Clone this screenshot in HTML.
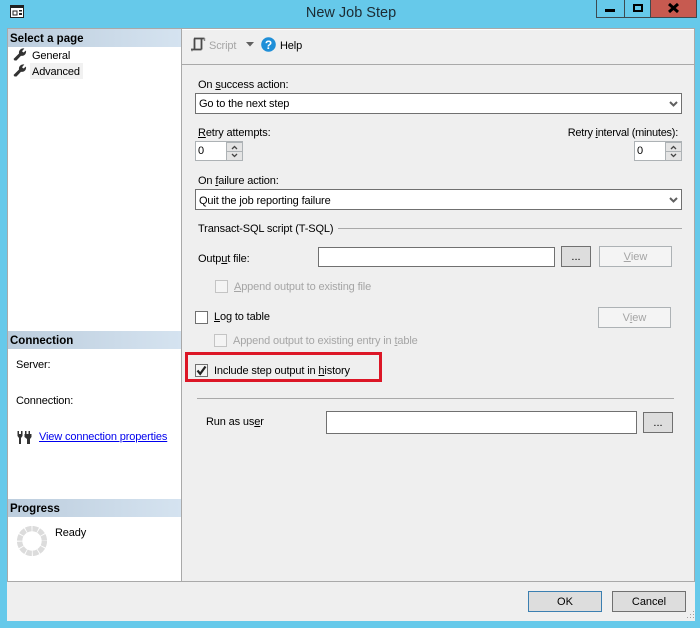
<!DOCTYPE html>
<html><head><meta charset="utf-8">
<style>
html,body{margin:0;padding:0;}
body{width:700px;height:628px;overflow:hidden;position:relative;background:#66c9ea;font-family:"Liberation Sans",sans-serif;font-size:11px;color:#000;}
div,span.a,svg{position:absolute;}
.t{white-space:nowrap;line-height:14px;height:14px;font-size:11px;letter-spacing:-.14px;margin-top:1px;}
.g{color:#a5a5a5;}
.hd{left:8px;width:173px;height:18px;background:linear-gradient(90deg,#bccddd,#d5e3f0);}
.hdt{left:10px;font-weight:bold;font-size:11.5px;white-space:nowrap;line-height:18px;margin-top:1px;}
.box{background:#fff;border:1px solid #707070;box-sizing:border-box;}
.btn{background:#dddddd;border:1px solid #707070;box-sizing:border-box;text-align:center;font-size:11px;}
.dis{background:#f4f4f4;border:1px solid #adb2b5;box-sizing:border-box;text-align:center;color:#a5a5a5;font-size:11px;line-height:20px;}
.chk{width:11px;height:11px;border:1px solid #707070;background:#fff;}
.chkd{width:11px;height:11px;border:1px solid #c4c4c4;background:#f4f4f4;}
u{text-underline-offset:1px;}
</style></head><body>
<!-- title -->
<svg style="left:9px;top:4px" width="17" height="15" viewBox="0 0 17 15"><rect x="1.5" y="1.5" width="13" height="12" fill="#fff" stroke="#222"/><rect x="1" y="1" width="14" height="3" fill="#222"/><rect x="4" y="7" width="4" height="4" fill="none" stroke="#222"/><rect x="10" y="6" width="3" height="1.5" fill="#222"/><rect x="10" y="9" width="3" height="2" fill="#222"/></svg>
<div style="left:0;top:4px;width:702px;text-align:center;font-size:14.5px;line-height:18px;color:#1c2b33;">New Job Step</div>
<!-- window buttons -->
<div style="left:596px;top:-1px;width:28px;height:19px;box-sizing:border-box;border:1px solid #3d4a50;border-right:none;"></div>
<div style="left:605px;top:9px;width:10px;height:3px;background:#000;"></div>
<div style="left:624px;top:-1px;width:26px;height:19px;box-sizing:border-box;border:1px solid #3d4a50;border-right:none;"></div>
<div style="left:633px;top:4px;width:10px;height:8px;box-sizing:border-box;border:2px solid #000;"></div>
<div style="left:650px;top:-1px;width:47px;height:19px;box-sizing:border-box;border:1px solid #3d4a50;background:#c75a50;"></div>
<svg style="left:668px;top:3px" width="11" height="10" viewBox="0 0 11 10"><path d="M1 1L10 9M10 1L1 9" stroke="#000" stroke-width="3" fill="none"/></svg>

<!-- client -->
<div style="left:7px;top:28px;width:688px;height:593px;background:#efefef;"></div>
<div style="left:7px;top:28px;width:688px;height:1px;background:#a9a9a9;"></div>
<div style="left:7px;top:29px;width:1px;height:552px;background:#a9a9a9;"></div>
<div style="left:8px;top:29px;width:173px;height:552px;background:#fff;"></div>
<div style="left:181px;top:29px;width:1px;height:552px;background:#a9a9a9;"></div>
<div style="left:182px;top:29px;width:512px;height:1px;background:#fff;"></div>
<div style="left:182px;top:64px;width:513px;height:1px;background:#a9a9a9;"></div>
<div style="left:694px;top:29px;width:1px;height:552px;background:#a9a9a9;"></div>
<div style="left:7px;top:581px;width:688px;height:1px;background:#a9a9a9;"></div>

<!-- left panel -->
<div class="hd" style="top:29px;"></div><div class="hdt" style="top:29px;">Select a page</div>
<svg style="left:13px;top:48px" width="14" height="13" viewBox="0 0 14 13"><path d="M.5 11L1.5 12.5L3.5 12.5L8 7.8C11 8.5 13.6 6 13 2.5L10.5 4.5L9 3.2L11.3.5C8 0 5.5 2.5 6 5.5Z" fill="#333"/></svg>
<div class="t" style="left:32px;top:48px;">General</div>
<svg style="left:13px;top:64px" width="14" height="13" viewBox="0 0 14 13"><path d="M.5 11L1.5 12.5L3.5 12.5L8 7.8C11 8.5 13.6 6 13 2.5L10.5 4.5L9 3.2L11.3.5C8 0 5.5 2.5 6 5.5Z" fill="#333"/></svg>
<div style="left:30px;top:63px;width:53px;height:16px;background:#f1f1f1;"></div>
<div class="t" style="left:32px;top:64px;">Advanced</div>

<div class="hd" style="top:331px;"></div><div class="hdt" style="top:331px;">Connection</div>
<div class="t" style="left:16px;top:357px;">Server:</div>
<div class="t" style="left:16px;top:393px;">Connection:</div>
<svg style="left:17px;top:431px" width="15" height="13" viewBox="0 0 15 13"><path d="M.5 0H2V3H4V0H5.5V5L4 7V13H2V7L.5 5ZM8 0H9.5V3H11.5V0H13V3H14.5V6L13 8V13H10V8L7.5 6V3H8Z" fill="#333"/></svg>
<div class="t" style="left:39px;top:429px;color:#0000ee;text-decoration:underline;">View connection properties</div>

<div class="hd" style="top:499px;"></div><div class="hdt" style="top:499px;">Progress</div>
<svg style="left:17px;top:526px" width="30" height="30" viewBox="0 0 30 30"><circle cx="15" cy="15" r="12.4" fill="none" stroke="#dcdcdc" stroke-width="5.4" stroke-dasharray="5.6 0.9"/></svg>
<div class="t" style="left:55px;top:525px;">Ready</div>

<!-- toolbar -->
<svg style="left:190px;top:37px" width="16" height="15" viewBox="0 0 16 15"><path d="M4 1.5H14.5M4.5 1.5V12.5M11.5 1.5V12.5M1 12.5H11.5" stroke="#4a4a4a" stroke-width="1.8" fill="none"/><path d="M14.5 1V4" stroke="#888" stroke-width="1.4"/><path d="M1 13.5H3" stroke="#888" stroke-width="1.4"/></svg>
<div class="t g" style="left:209px;top:38px;">Script</div>
<svg style="left:246px;top:42px" width="8" height="5" viewBox="0 0 8 5"><path d="M0 0H8L4 4.5Z" fill="#606060"/></svg>
<svg style="left:261px;top:37px" width="15" height="15" viewBox="0 0 15 15"><circle cx="7.5" cy="7.5" r="7.3" fill="#1f8fd8"/><text x="7.5" y="12" text-anchor="middle" font-family="Liberation Sans" font-weight="bold" font-size="12" fill="#fff">?</text></svg>
<div class="t" style="left:280px;top:38px;">Help</div>

<!-- form -->
<div class="t" style="left:198px;top:77px;">On <u>s</u>uccess action:</div>
<div class="box" style="left:195px;top:93px;width:487px;height:21px;"></div>
<div class="t" style="left:199px;top:96px;">Go to the next step</div>
<svg style="left:669px;top:101px" width="9" height="6" viewBox="0 0 9 6"><path d="M1 1L4.5 4.5L8 1" stroke="#606060" stroke-width="2" fill="none"/></svg>

<div class="t" style="left:198px;top:125px;"><u>R</u>etry attempts:</div>
<div style="left:195px;top:141px;width:48px;height:20px;background:#adb2b5;"></div>
<div style="left:196px;top:142px;width:30px;height:18px;background:#fff;"></div>
<div class="t" style="left:198px;top:143px;">0</div>
<div style="left:227px;top:143px;width:15px;height:8px;background:#e4e4e4;"></div>
<div style="left:227px;top:152px;width:15px;height:8px;background:#e4e4e4;"></div>
<svg style="left:231px;top:145px" width="7" height="13" viewBox="0 0 7 13"><path d="M1 4L3.5 1.5L6 4M1 9L3.5 11.5L6 9" stroke="#444" stroke-width="1.3" fill="none"/></svg>

<div class="t" style="right:22px;top:125px;letter-spacing:-.26px;">Retry <u>i</u>nterval (minutes):</div>
<div style="left:634px;top:141px;width:48px;height:20px;background:#adb2b5;"></div>
<div style="left:635px;top:142px;width:30px;height:18px;background:#fff;"></div>
<div class="t" style="left:637px;top:143px;">0</div>
<div style="left:666px;top:143px;width:15px;height:8px;background:#e4e4e4;"></div>
<div style="left:666px;top:152px;width:15px;height:8px;background:#e4e4e4;"></div>
<svg style="left:670px;top:145px" width="7" height="13" viewBox="0 0 7 13"><path d="M1 4L3.5 1.5L6 4M1 9L3.5 11.5L6 9" stroke="#444" stroke-width="1.3" fill="none"/></svg>

<div class="t" style="left:198px;top:173px;">On <u>f</u>ailure action:</div>
<div class="box" style="left:195px;top:189px;width:487px;height:21px;"></div>
<div class="t" style="left:199px;top:193px;">Quit the job reporting failure</div>
<svg style="left:669px;top:197px" width="9" height="6" viewBox="0 0 9 6"><path d="M1 1L4.5 4.5L8 1" stroke="#606060" stroke-width="2" fill="none"/></svg>

<div class="t" style="left:198px;top:221px;">Transact-SQL script (T-SQL)</div>
<div style="left:338px;top:228px;width:344px;height:1px;background:#a9a9a9;"></div>

<div class="t" style="left:198px;top:251px;">Outp<u>u</u>t file:</div>
<div class="box" style="left:318px;top:247px;width:237px;height:20px;"></div>
<div class="btn" style="left:561px;top:246px;width:30px;height:21px;line-height:20px;">...</div>
<div class="dis" style="left:599px;top:246px;width:73px;height:21px;"><u>V</u>iew</div>

<div class="chkd" style="left:215px;top:280px;"></div>
<div class="t g" style="left:234px;top:279px;"><u>A</u>ppend output to existing file</div>

<div class="chk" style="left:195px;top:311px;"></div>
<div class="t" style="left:214px;top:309px;"><u>L</u>og to table</div>
<div class="dis" style="left:598px;top:307px;width:73px;height:21px;">V<u>i</u>ew</div>

<div class="chkd" style="left:214px;top:334px;"></div>
<div class="t g" style="left:233px;top:333px;">Append output to existing entry in <u>t</u>able</div>

<div style="left:185px;top:352px;width:197px;height:30px;box-sizing:border-box;border:3px solid #dc1626;"></div>
<div class="chk" style="left:195px;top:364px;background:#f4f4f4;"></div>
<svg style="left:195px;top:364px" width="13" height="13" viewBox="0 0 13 13"><path d="M2.5 6.5L5.2 9.8L10.5 2.5" stroke="#222" stroke-width="2.2" fill="none"/></svg>
<div class="t" style="left:214px;top:363px;">Include step output in <u>h</u>istory</div>

<div style="left:197px;top:398px;width:477px;height:1px;background:#a9a9a9;"></div>
<div class="t" style="left:206px;top:414px;">Run as us<u>e</u>r</div>
<div class="box" style="left:326px;top:411px;width:311px;height:23px;"></div>
<div class="btn" style="left:643px;top:412px;width:30px;height:21px;line-height:20px;">...</div>

<!-- footer -->
<div class="btn" style="left:528px;top:591px;width:74px;height:21px;line-height:20px;border-color:#3b7fb1;">OK</div>
<div class="btn" style="left:612px;top:591px;width:74px;height:21px;line-height:20px;">Cancel</div>
<svg style="left:685px;top:610px" width="10" height="10" viewBox="0 0 10 10"><path d="M8 1h1v1h-1zM5 4h1v1h-1zM8 4h1v1h-1zM2 7h1v1h-1zM5 7h1v1h-1zM8 7h1v1h-1z" fill="#a0a0a0"/></svg>
</body></html>
